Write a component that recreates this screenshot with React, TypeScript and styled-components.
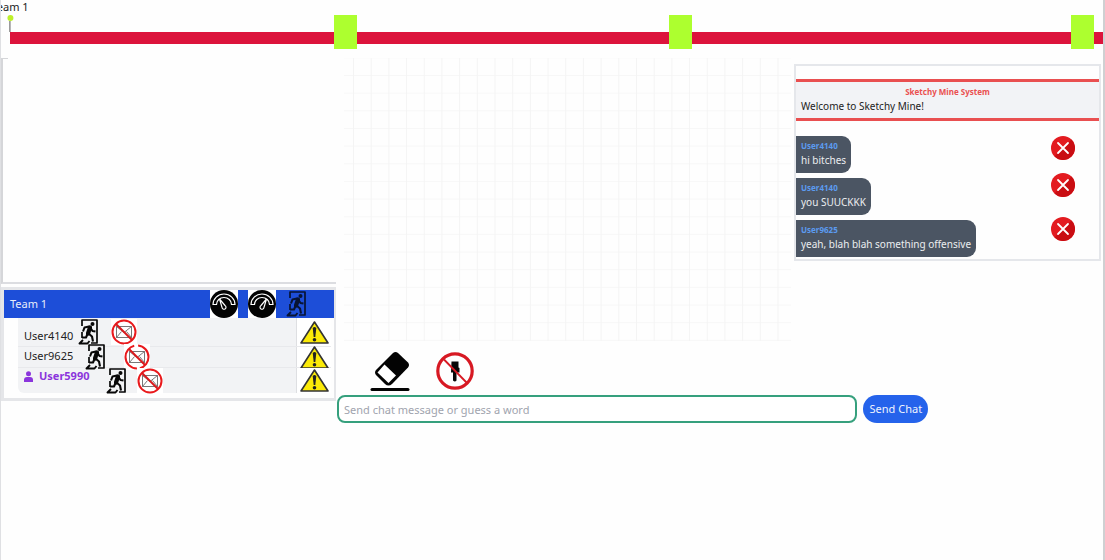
import React from "react";
import styled, { createGlobalStyle } from "styled-components";

const Global = createGlobalStyle`
  * { box-sizing: border-box; }
  body { margin: 0; background: #fefefe; color: #222; font: 11px/16px "Noto Sans", sans-serif; }
  h2, p, ul { margin: 0; padding: 0; font: inherit; }
  button { padding: 0; border: 0; background: none; color: inherit; font: inherit; cursor: pointer; }
  svg { display: block; }
`;

const Page = styled.main`
  min-height: 100vh;
  overflow: hidden;
  border-left: 1px solid #dfe0e3;
  border-right: 2px solid #cfd0d2;
`;
const Timeline = styled.header`
  position: relative;
  height: 58px;
  padding: 32px 0 0 9px;
`;
const Track = styled.div`
  position: relative;
  height: 12px;
  background: #dc143c;
`;
const Stop = styled.span<{ $at: number }>`
  position: absolute;
  top: -17px;
  left: ${(p) => p.$at}%;
  width: 23px;
  height: 34px;
  background: #adff2f;
`;
const Pin = styled.div`
  position: absolute;
  top: -1px;
  left: 9px;
  transform: translateX(-50%);
  display: flex;
  flex-direction: column;
  align-items: center;
  white-space: nowrap;
`;
const Dot = styled.i`
  width: 6px;
  height: 6px;
  border-radius: 50%;
  background: #bdf02a;
`;
const Stem = styled.i`
  width: 1px;
  height: 11px;
  background: #555;
`;

const Columns = styled.div`
  display: grid;
  grid-template-columns: minmax(0, 336fr) minmax(0, 766fr);
  align-items: start;
`;
const Words = styled.section`
  height: 226px;
  margin-right: 1px;
  border-left: 2px solid #d5d6d9;
  border-bottom: 2px solid #dcdde1;
  background: linear-gradient(#d5d6d9, #d5d6d9) 0 0 / 5px 1px no-repeat;
`;
const Teams = styled.section`
  margin: 3px 1px 0 0;
  padding-bottom: 5px;
  border: solid #e5e6e9;
  border-width: 3px 2px 3px 3px;
`;
const TeamHead = styled.div`
  display: flex;
  align-items: center;
  height: 28px;
  padding: 0 20px 0 6px;
  background: #1d4ed8;
  color: #e8edfa;
`;
const TeamName = styled.h2`
  flex: 1;
`;
const HeadTools = styled.div`
  display: flex;
  gap: 10px;
`;
const Tile = styled.button<{ $plain?: boolean }>`
  width: 28px;
  height: 28px;
  background: ${(p) => (p.$plain ? "none" : "#fff")};
`;
const Players = styled.ul`
  margin: 0 3px 0 14px;
  border-radius: 0 0 0 6px;
  background: #f2f3f5;
  list-style: none;
`;
const Player = styled.li<{ $height: number }>`
  display: flex;
  align-items: center;
  height: ${(p) => p.$height}px;
  padding-left: 6px;
  & + & { border-top: 1px solid #e8e9ec; }
`;
const PlayerName = styled.span<{ $me?: boolean; $align: string }>`
  display: flex;
  align-items: center;
  align-self: ${(p) => p.$align};
  gap: 6px;
  padding-bottom: 2px;
  color: ${(p) => (p.$me ? "#8b35dc" : "#222")};
  font-weight: ${(p) => (p.$me ? 700 : 400)};
`;
const Kick = styled.button<{ $gap: number }>`
  margin-left: ${(p) => p.$gap}px;
`;
const Mute = styled.button<{ $gap: number }>`
  margin-left: ${(p) => p.$gap}px;
  background: #fff;
`;
const Warn = styled.button`
  display: flex;
  align-items: center;
  justify-content: center;
  align-self: stretch;
  width: 35px;
  margin-left: auto;
  border-left: 1px solid #dedfe2;
  background: #fff;
  svg { flex: none; }
`;

const Board = styled.div`
  display: grid;
  grid-template-columns: minmax(0, 447fr) minmax(0, 307fr);
  column-gap: 3px;
  align-items: start;
  padding: 0 2px 0 7px;
`;
const Canvas = styled.div`
  height: 283px;
  background-image:
    linear-gradient(90deg, #f4f4f4 1px, transparent 1px),
    linear-gradient(#f7f7f7 1px, transparent 1px);
  background-size: 3.96% 6.24%;
  background-position: 9px 0, 0 17px;
`;
const Chat = styled.section`
  margin-top: 6px;
  padding: 13px 0 2px;
  border: 2px solid #e5e7eb;
`;
const Notice = styled.div`
  height: 42px;
  margin-bottom: 15px;
  padding: 4px 5px;
  border: solid #e94f50;
  border-width: 3px 0;
  background: #f2f3f6;
`;
const System = styled.strong`
  display: block;
  color: #ea5050;
  font-size: 8px;
  line-height: 12px;
  text-align: center;
`;
const Line = styled.p`
  font-size: 10px;
  line-height: 16px;
`;
const Message = styled.div`
  display: flex;
  justify-content: space-between;
  align-items: flex-start;
  height: 37px;
  margin-bottom: 5px;
  padding-right: 24px;
  &:last-child { margin-bottom: 0; }
`;
const Bubble = styled.div`
  height: 37px;
  padding: 4px 5px;
  border-radius: 0 9px 9px 0;
  background: #4b5563;
  color: #eceef0;
`;
const Author = styled.strong`
  display: block;
  color: #5b9bf0;
  font-size: 8px;
  line-height: 12px;
`;
const Remove = styled.button<{ $drop: number }>`
  margin-top: ${(p) => p.$drop}px;
`;
const DrawTools = styled.div`
  display: flex;
  align-items: center;
  gap: 26px;
  height: 54px;
  padding: 6px 0 0 33px;
`;
const Form = styled.form`
  display: flex;
  gap: 6px;
  width: 77.2%;
`;
const Entry = styled.input`
  flex: 1;
  min-width: 0;
  height: 28px;
  padding: 0 5px;
  border: 2px solid #36a07d;
  border-radius: 8px;
  outline: 0;
  background: #fff;
  font: inherit;
  &::placeholder { color: #9fa4ae; opacity: 1; }
`;
const Send = styled.button`
  && {
    width: 65px;
    height: 28px;
    border-radius: 14px;
    background: #2563eb;
    color: #f0f4fe;
  }
`;

const Exit = ({ h = 26, ink = "#080808" }: { h?: number; ink?: string }) => (
  <svg width="22" height={h} viewBox="0 0 22 26" fill="none" stroke={ink} strokeLinejoin="round">
    <path d="M4 7V1h15v23h-6M4 13v6" strokeWidth="1.700" />
    <circle cx="14.500" cy="5" r="2" fill={ink} stroke="none" />
    <path d="M12 8.500l-2 6" strokeWidth="4.200" strokeLinecap="round" />
    <path d="M11 7.500L6.500 8.500l-1.500 4M12.500 9l2 3 3 .5M10.500 14.500l3.500 3 1 5M9.500 15L8 18.500H4" strokeWidth="2.100" />
    <path d="M5 21L1.500 24.500H9.500l2-2.500" strokeWidth="1.900" />
  </svg>
);
const Gauge = ({ flip = false }: { flip?: boolean }) => (
  <svg width="28" height="28" viewBox="0 0 28 28" fill="none" stroke="#fff">
    <circle cx="14" cy="14" r="14" fill="#030303" stroke="none" />
    <path d="M3 14.500a11 10.500 0 0 1 22 0h-3.500a7.500 7 0 0 0-15 0z" strokeWidth="1.200" />
    <g transform={flip ? "translate(28 0) scale(-1 1)" : undefined}>
      <path d="M9.500 9l5.500 6.500a2 2 0 1 1-3 1.800z" strokeWidth="1.200" fill="#030303" />
    </g>
  </svg>
);
const NoMail = ({ broken = false }: { broken?: boolean }) => (
  <svg width="26" height="26" viewBox="0 0 26 26" fill="none">
    <path d="M5.500 7.500h15v11h-15zM5.500 7.500l7.500 6 7.500-6M5.500 18.500l5-6M20.500 18.500l-5-6" stroke="#555" strokeWidth=".8" />
    <circle cx="13" cy="13" r="11.500" stroke="#e9191c" strokeWidth="2" strokeDasharray={broken ? "15 3 33 4 17.300 0" : undefined} />
    <path d="M5 5l16 16" stroke="#d9191c" strokeWidth="2" />
  </svg>
);
const Warning = () => (
  <svg width="29" height="23" viewBox="0 0 29 23">
    <path d="M14.500 1L28 22H1z" fill="#fbea08" stroke="#333" strokeWidth="1.600" strokeLinejoin="round" />
    <path d="M12.700 7q1.800-2 3.600 0L15.300 16h-1.600z" fill="#222" />
    <circle cx="14.500" cy="18.800" r="1.800" fill="#222" />
  </svg>
);
const Person = () => (
  <svg width="9" height="11" viewBox="0 0 9 11" fill="#8b35dc">
    <circle cx="4.500" cy="2.700" r="2.500" />
    <path d="M0 11V9q0-3 3-3h3q3 0 3 3v2z" />
  </svg>
);
const Cross = () => (
  <svg width="24" height="24" viewBox="0 0 24 24">
    <circle cx="12" cy="12" r="12" fill="#e31b20" />
    <path d="M20.500 3.500a12 12 0 0 1-17 17z" fill="#c90d12" />
    <path d="M7 7l10 10M17 7L7 17" stroke="#fff" strokeWidth="1.800" strokeLinecap="round" />
  </svg>
);
const Eraser = () => (
  <svg width="40" height="41" viewBox="0 0 40 41">
    <path d="M23 2q2.500-2 5 0L38 11.500q2 2.500 0 5L22 33q-3.500 3-7 0L6 24q-2-2.500 0-5z" fill="#030303" />
    <path d="M14.500 13.500L26 24.500 18.500 32 7.500 21.500z" fill="#fff" />
    <path d="M2 38.500h36" stroke="#030303" strokeWidth="3" strokeLinecap="round" />
  </svg>
);
const NoBrush = () => (
  <svg width="38" height="38" viewBox="0 0 38 38">
    <path d="M15.500 9.500h7v6l1 .5v4.500h-3v8q-1.500 2-3.500 0v-8h-2z" fill="#080808" />
    <circle cx="19" cy="19" r="17.200" fill="none" stroke="#d71923" strokeWidth="3.200" />
    <path d="M8 7.500L31 31" stroke="#d71923" strokeWidth="1.800" />
  </svg>
);

const players = [
  { name: "User4140", height: 28, align: "flex-end", kick: 5, mute: 11 },
  { name: "User9625", height: 21, align: "center", kick: 12, mute: 17, broken: true },
  { name: "User5990", height: 26, align: "flex-start", kick: 16, mute: 9, me: true },
];
const messages = [
  { from: "User4140", text: "hi bitches", drop: 0 },
  { from: "User4140", text: "you SUUCKKK", drop: -5 },
  { from: "User9625", text: "yeah, blah blah something offensive", drop: -3 },
];

export default function App() {
  return (
    <Page>
      <Global />
      <Timeline>
        <Track>
          {[29.6, 60.3, 97.1].map((at) => <Stop key={at} $at={at} />)}
        </Track>
        <Pin>Team 1<Dot /><Stem /></Pin>
      </Timeline>
      <Columns>
        <div>
          <Words />
          <Teams>
            <TeamHead>
              <TeamName>Team 1</TeamName>
              <HeadTools>
                <Tile aria-label="Slow down"><Gauge /></Tile>
                <Tile aria-label="Speed up"><Gauge flip /></Tile>
                <Tile $plain aria-label="Leave team"><Exit h={28} ink="#081433" /></Tile>
              </HeadTools>
            </TeamHead>
            <Players>
              {players.map((p) => (
                <Player key={p.name} $height={p.height}>
                  <PlayerName $me={p.me} $align={p.align}>{p.me && <Person />}{p.name}</PlayerName>
                  <Kick $gap={p.kick} aria-label={`Kick ${p.name}`}><Exit /></Kick>
                  <Mute $gap={p.mute} aria-label={`Mute ${p.name}`}><NoMail broken={p.broken} /></Mute>
                  <Warn aria-label={`Warn ${p.name}`}><Warning /></Warn>
                </Player>
              ))}
            </Players>
          </Teams>
        </div>
        <div>
          <Board>
            <Canvas />
            <Chat>
              <Notice>
                <System>Sketchy Mine System</System>
                <Line>Welcome to Sketchy Mine!</Line>
              </Notice>
              {messages.map((m) => (
                <Message key={m.text}>
                  <Bubble><Author>{m.from}</Author><Line>{m.text}</Line></Bubble>
                  <Remove $drop={m.drop} aria-label="Delete message"><Cross /></Remove>
                </Message>
              ))}
            </Chat>
          </Board>
          <DrawTools>
            <button aria-label="Eraser"><Eraser /></button>
            <button aria-label="Disable drawing"><NoBrush /></button>
          </DrawTools>
          <Form onSubmit={(e) => e.preventDefault()}>
            <Entry aria-label="Chat message" placeholder="Send chat message or guess a word" />
            <Send type="submit">Send Chat</Send>
          </Form>
        </div>
      </Columns>
    </Page>
  );
}
